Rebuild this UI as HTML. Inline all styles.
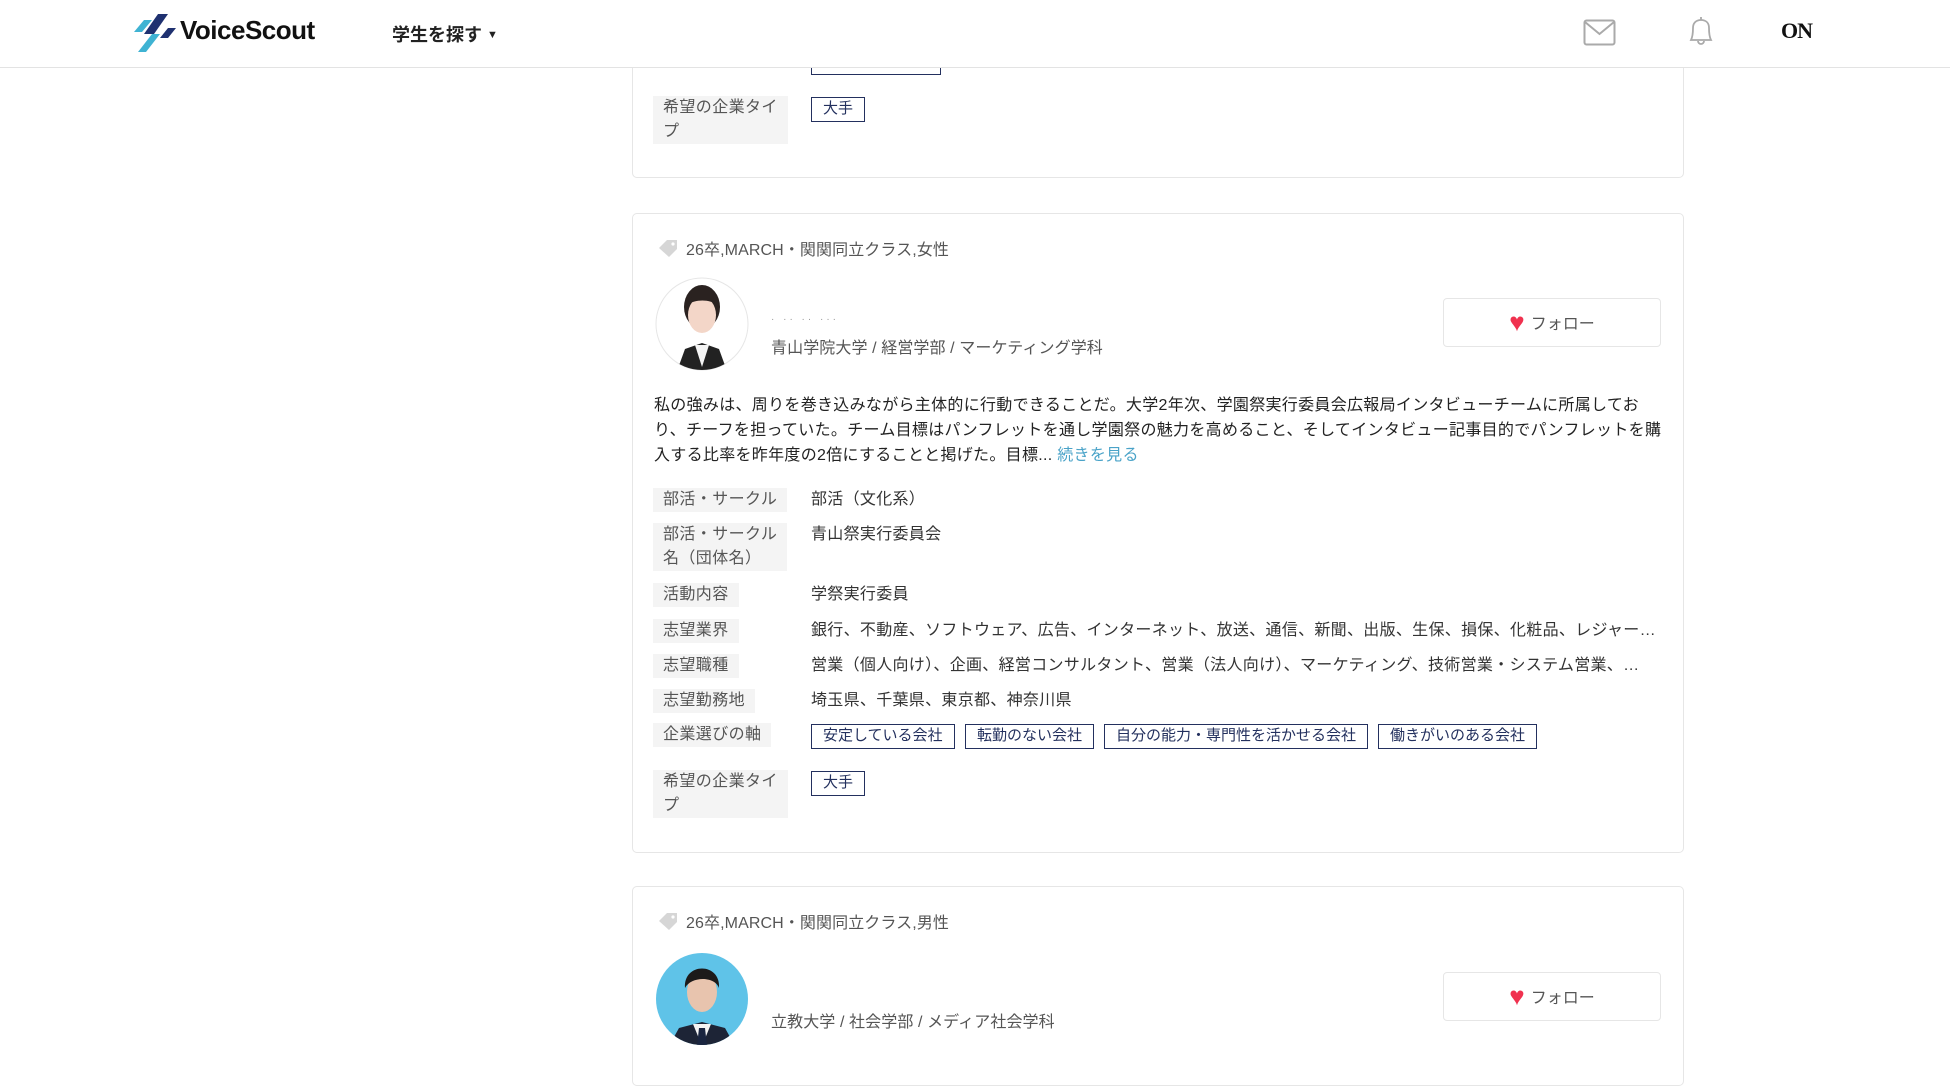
<!DOCTYPE html>
<html><head><meta charset="utf-8"><style>
*{box-sizing:border-box;margin:0;padding:0}
body{width:1950px;height:1051px;overflow:hidden;background:#fff;font-family:"Liberation Sans","Noto Sans CJK JP",sans-serif;color:#333;position:relative}
.a{position:absolute;white-space:nowrap}
.hdr{position:absolute;left:0;top:0;width:1950px;height:68px;background:#fff;border-bottom:1px solid #e3e3e3;z-index:5}
.card{position:absolute;left:632px;width:1052px;border:1px solid #e6e6e6;border-radius:5px;background:#fff}
.lab{position:absolute;left:653px;background:#f4f4f4;color:#555;font-size:16px;line-height:24px;padding:0 10px;white-space:nowrap;letter-spacing:0.4px}
.val{position:absolute;left:811px;font-size:16px;line-height:24px;color:#333;white-space:nowrap;letter-spacing:0.3px}
.tag{position:absolute;height:25px;border:1.5px solid #23305e;color:#23305e;font-size:15px;line-height:22px;padding:0 11px;white-space:nowrap}
.meta{font-size:16px;color:#555;letter-spacing:0.1px}
.fb{position:absolute;left:1443px;width:218px;height:49px;border:1px solid #e6e6e6;border-radius:4px;font-size:16px;color:#555;text-align:center;line-height:47px}
.fb b{color:#f0314f;font-size:26px;font-weight:normal;margin-right:6px;vertical-align:-2px}
</style></head><body>
<div class="hdr">
 <svg class="a" style="left:130px;top:12px" width="50" height="42" viewBox="0 0 50 42">
  <polygon points="14,8 22,8 12,20 4,20" fill="#3fb3d3"/>
  <polygon points="22,22 30,22 16,40 8,40" fill="#3fb3d3"/>
  <polygon points="28,2 38,2 24,22 14,22" fill="#1f3170"/>
  <polygon points="38,16 46,16 38,26 30,26" fill="#1f3170"/>
 </svg>
 <div class="a" style="left:180px;top:15px;font-size:26px;font-weight:bold;color:#111;letter-spacing:-0.5px">VoiceScout</div>
 <div class="a" style="left:392px;top:21px;font-size:18px;font-weight:bold;color:#222">学生を探す <span style="font-size:11px;vertical-align:3px">▼</span></div>
 <svg class="a" style="left:1583px;top:19px" width="33" height="27" viewBox="0 0 33 27"><rect x="1.5" y="1.5" width="30" height="24" rx="2" fill="none" stroke="#aaa" stroke-width="2"/><path d="M2 3 L16.5 15 L31 3" fill="none" stroke="#aaa" stroke-width="2"/></svg>
 <svg class="a" style="left:1686px;top:16px" width="30" height="32" viewBox="0 0 30 32"><path d="M5 24 C7 20 7 16 7 12 C7 7 10 4 15 4 C20 4 23 7 23 12 C23 16 23 20 25 24 Z" fill="none" stroke="#aaa" stroke-width="1.8"/><path d="M12 25 A3 3 0 0 0 18 25" fill="none" stroke="#aaa" stroke-width="1.8"/><line x1="15" y1="1" x2="15" y2="4" stroke="#aaa" stroke-width="1.8"/></svg>
 <div class="a" style="left:1781px;top:18px;font-family:'Liberation Serif',serif;font-size:22px;font-weight:bold;color:#111;letter-spacing:-1px">ON</div>
</div>

<div class="card" style="top:20px;height:158px"></div>
<div class="tag" style="left:811px;top:50px;width:130px"></div>
<div class="lab" style="top:96px">希望の企業タイ<br>プ</div>
<div class="tag" style="left:811px;top:97px">大手</div>

<div class="card" style="top:213px;height:640px"></div>
<svg class="a" style="left:657px;top:238px" width="22" height="20" viewBox="0 0 22 20"><path d="M2 10 L10 2 L20 2 L20 11 L12 19 Z" fill="#d6d6d6"/><circle cx="16" cy="6" r="1.6" fill="#fff"/></svg>
<div class="a meta" style="left:686px;top:236px">26卒,MARCH・関関同立クラス,女性</div>
<svg class="a" style="left:655px;top:277px" width="94" height="94" viewBox="0 0 94 94">
 <defs><clipPath id="c1"><circle cx="47" cy="47" r="46"/></clipPath></defs>
 <circle cx="47" cy="47" r="46" fill="#fff" stroke="#e6e6e6"/>
 <g clip-path="url(#c1)">
 <path d="M22 94 L30 72 L47 66 L64 72 L72 94 Z" fill="#222"/>
 <path d="M40 68 L47 90 L54 68 Z" fill="#f4f4f4"/>
 <ellipse cx="47" cy="30" rx="18" ry="22" fill="#2a2220"/>
 <ellipse cx="47" cy="38" rx="14" ry="18" fill="#f3d6c8"/>
 <path d="M32 28 C34 14 60 14 62 28 C55 22 40 22 32 28Z" fill="#2a2220"/>
 </g></svg>
<div class="a" style="left:771px;top:314px;font-size:10px;color:#999;letter-spacing:3px">· ·· ·· ···</div>
<div class="a meta" style="left:771px;top:334px">青山学院大学 / 経営学部 / マーケティング学科</div>
<div class="fb" style="top:298px"><b>♥</b>フォロー</div>
<div class="a" style="left:654px;top:393px;font-size:16px;line-height:25px;color:#222;letter-spacing:0.3px">私の強みは、周りを巻き込みながら主体的に行動できることだ。大学2年次、学園祭実行委員会広報局インタビューチームに所属してお<br>り、チーフを担っていた。チーム目標はパンフレットを通し学園祭の魅力を高めること、そしてインタビュー記事目的でパンフレットを購<br>入する比率を昨年度の2倍にすることと掲げた。目標... <span style="color:#4aa3c8">続きを見る</span></div>

<div class="lab" style="top:488px">部活・サークル</div><div class="val" style="top:488px">部活（文化系）</div>
<div class="lab" style="top:523px">部活・サークル<br>名（団体名）</div><div class="val" style="top:523px">青山祭実行委員会</div>
<div class="lab" style="top:583px">活動内容</div><div class="val" style="top:583px">学祭実行委員</div>
<div class="lab" style="top:619px">志望業界</div><div class="val" style="top:619px">銀行、不動産、ソフトウェア、広告、インターネット、放送、通信、新聞、出版、生保、損保、化粧品、レジャー…</div>
<div class="lab" style="top:654px">志望職種</div><div class="val" style="top:654px">営業（個人向け）、企画、経営コンサルタント、営業（法人向け）、マーケティング、技術営業・システム営業、…</div>
<div class="lab" style="top:689px">志望勤務地</div><div class="val" style="top:689px">埼玉県、千葉県、東京都、神奈川県</div>
<div class="lab" style="top:723px">企業選びの軸</div>
<div class="tag" style="left:811px;top:724px">安定している会社</div>
<div class="tag" style="left:965px;top:724px">転勤のない会社</div>
<div class="tag" style="left:1104px;top:724px">自分の能力・専門性を活かせる会社</div>
<div class="tag" style="left:1378px;top:724px">働きがいのある会社</div>
<div class="lab" style="top:770px">希望の企業タイ<br>プ</div>
<div class="tag" style="left:811px;top:771px">大手</div>

<div class="card" style="top:886px;height:200px"></div>
<svg class="a" style="left:657px;top:911px" width="22" height="20" viewBox="0 0 22 20"><path d="M2 10 L10 2 L20 2 L20 11 L12 19 Z" fill="#d6d6d6"/><circle cx="16" cy="6" r="1.6" fill="#fff"/></svg>
<div class="a meta" style="left:686px;top:909px">26卒,MARCH・関関同立クラス,男性</div>
<svg class="a" style="left:655px;top:952px" width="94" height="94" viewBox="0 0 94 94">
 <defs><clipPath id="c2"><circle cx="47" cy="47" r="46"/></clipPath></defs>
 <circle cx="47" cy="47" r="46" fill="#5fc3e8"/>
 <g clip-path="url(#c2)">
 <path d="M14 94 L24 76 L47 70 L70 76 L80 94 Z" fill="#1d2436"/>
 <path d="M38 72 L47 94 L56 72 Z" fill="#f4f4f4"/>
 <path d="M44 76 L50 76 L52 94 L42 94 Z" fill="#1a2540"/>
 <ellipse cx="47" cy="40" rx="15" ry="20" fill="#e8c4ae"/>
 <path d="M30 36 C28 10 66 10 64 36 C60 24 36 24 30 36Z" fill="#1c1a1a"/>
 </g></svg>
<div class="a meta" style="left:771px;top:1008px">立教大学 / 社会学部 / メディア社会学科</div>
<div class="fb" style="top:972px"><b>♥</b>フォロー</div>
</body></html>
